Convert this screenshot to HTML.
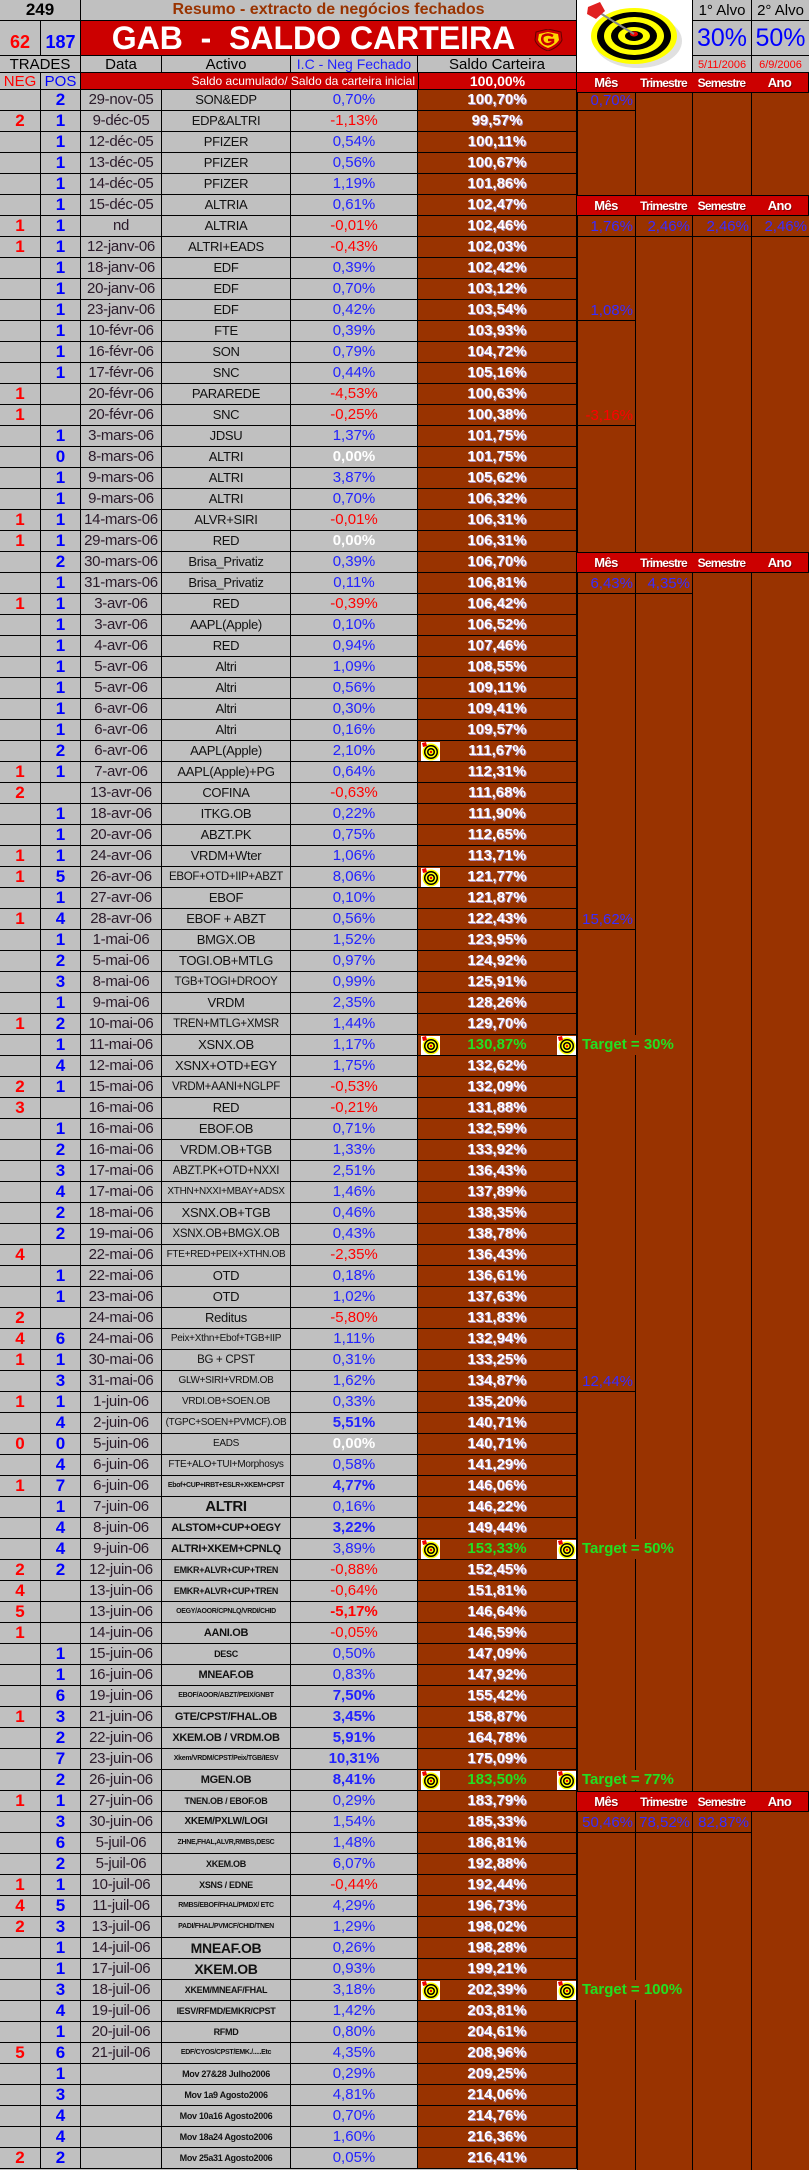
<!DOCTYPE html>
<html><head><meta charset="utf-8">
<style>
*{margin:0;padding:0;box-sizing:border-box}
body{width:809px;height:2170px;overflow:hidden;background:#c0c0c0;position:relative;font-family:"Liberation Sans",Arial,sans-serif}
.ab{position:absolute}
.c{display:flex;align-items:center;justify-content:center;text-align:center;white-space:nowrap}
table{position:absolute;left:0;top:90px;border-collapse:separate;border-spacing:0;table-layout:fixed;width:577px}
td{height:21px;border-right:1px solid #000;border-bottom:1px solid #000;padding:0;text-align:center;white-space:nowrap;overflow:hidden;font-size:14px;color:#222;line-height:20px}
td:nth-child(1){width:41px;color:#f00;font-weight:bold;font-size:17px}
td:nth-child(2){width:40px;color:#00f;font-weight:bold;font-size:17px}
td:nth-child(3){width:81px;color:#2a1a2a;font-size:15px;letter-spacing:-0.3px}
td:nth-child(4){width:129px;color:#111;font-size:13px;letter-spacing:-0.3px}
td:nth-child(5){width:127px;color:#22f;font-size:15px}
td:nth-child(6){width:159px;background:#993300;color:#fff;font-weight:bold;font-size:15px;text-shadow:1px 1px 0 #b090c0;position:relative}
td.r{color:#f00!important}
td.w{color:#fff!important;font-weight:bold}
td.bd{font-weight:bold}
td.g{color:#22e022!important;text-shadow:none!important}
td.s{font-size:11px!important;font-weight:bold}
td.x{font-size:9px!important;font-weight:bold}
td.xx{font-size:7px!important;font-weight:bold}
td.m{font-size:11.5px!important}
td.t{font-size:10px!important}
td.b14{font-weight:bold}
.vl{position:absolute;width:1px;background:#000}
.hl{position:absolute;height:1px;background:#000}
.hd{position:absolute;height:21px;background:#cc0000;color:#fff;font-weight:bold;font-size:13px;display:flex;align-items:center;justify-content:center;border-right:1px solid #000;border-bottom:1px solid #000;border-top:1px solid #000;letter-spacing:-0.6px;text-shadow:1px 1px 0 #800;overflow:hidden;white-space:nowrap}
.hd.n{font-size:12px;letter-spacing:-0.8px}
.v{position:absolute;height:21px;line-height:21px;text-align:right;color:#3a2cff;font-size:15px;padding-right:2px}
.tg{position:absolute;left:578px;width:114px;height:20px;background:#993300;color:#22e022;font-weight:bold;font-size:15px;line-height:20px;padding-left:4px}
.ic{position:absolute;width:19px;height:19px}
</style></head><body>

<div class="ab c" style="left:0;top:0;width:81px;height:21px;font-weight:bold;font-size:17px;border-right:1px solid #000;border-bottom:1px solid #000">249</div>
<div class="ab c" style="left:81px;top:0;width:496px;height:21px;color:#993300;font-weight:bold;font-size:16px;border-right:1px solid #000;border-bottom:1px solid #000">Resumo - extracto de negócios fechados</div>
<div class="ab c" style="left:0;top:21px;width:41px;height:35px;color:#f00;font-weight:bold;font-size:18px;border-right:1px solid #000;border-bottom:1px solid #000;padding-top:8px">62</div>
<div class="ab c" style="left:41px;top:21px;width:40px;height:35px;color:#00f;font-weight:bold;font-size:18px;border-right:1px solid #000;border-bottom:1px solid #000;padding-top:8px">187</div>
<div class="ab c" style="left:81px;top:21px;width:496px;height:35px;background:#cc0000;color:#fff;font-weight:bold;font-size:32px;border-right:1px solid #000;border-bottom:1px solid #000;padding-right:30px;white-space:pre">GAB  -  SALDO CARTEIRA</div>
<svg class="ab" style="left:533px;top:29px" width="31" height="22" viewBox="0 0 31 22"><path d="M3 3 L15 0 L28 3 L29 11 Q26 18 15 22 Q4 18 2 11 Z" fill="#cc0000" stroke="#600" stroke-width="1"/><path d="M6 5 L15 3 L25 5 L26 11 Q23 16 15 19 Q7 16 5 11 Z" fill="#ffd800"/><path d="M20 7 Q15 4 10 7 Q8 11 11 14 Q15 17 20 13 L20 11 L15 11" fill="none" stroke="#cc0000" stroke-width="2.5"/></svg>
<div class="ab c" style="left:0;top:56px;width:81px;height:17px;font-size:15px;border-right:1px solid #000;border-bottom:1px solid #000">TRADES</div>
<div class="ab c" style="left:81px;top:56px;width:81px;height:17px;font-size:15px;border-right:1px solid #000;border-bottom:1px solid #000">Data</div>
<div class="ab c" style="left:162px;top:56px;width:129px;height:17px;font-size:15px;border-right:1px solid #000;border-bottom:1px solid #000">Activo</div>
<div class="ab c" style="left:291px;top:56px;width:127px;height:17px;font-size:14px;color:#22f;border-right:1px solid #000;border-bottom:1px solid #000">I.C - Neg Fechado</div>
<div class="ab c" style="left:418px;top:56px;width:159px;height:17px;font-size:15px;border-right:1px solid #000;border-bottom:1px solid #000">Saldo Carteira</div>
<div class="ab c" style="left:0;top:73px;width:41px;height:17px;font-size:15px;color:#f00;border-right:1px solid #000;border-bottom:1px solid #000">NEG</div>
<div class="ab c" style="left:41px;top:73px;width:40px;height:17px;font-size:15px;color:#00f;border-right:1px solid #000;border-bottom:1px solid #000">POS</div>
<div class="ab" style="left:81px;top:73px;width:337px;height:17px;background:#cc0000;color:#fff;font-size:12px;text-align:right;line-height:17px;padding-right:3px;border-bottom:1px solid #000">Saldo acumulado/ Saldo da carteira inicial</div>
<div class="ab c" style="left:418px;top:73px;width:159px;height:17px;background:#cc0000;color:#fff;font-weight:bold;font-size:14px;border-left:1px solid #000;border-right:1px solid #000;border-bottom:1px solid #000">100,00%</div>

<div class="ab" style="left:577px;top:0;width:116px;height:73px;background:#fff;border-right:1px solid #000;border-bottom:1px solid #000"></div>
<svg class="ab" style="left:578px;top:1px" width="114" height="71" viewBox="0 0 114 71">
<ellipse cx="60" cy="40" rx="44" ry="27" fill="#ccc" opacity=".6"/>
<ellipse cx="56" cy="35" rx="43" ry="28" fill="#ffff00"/>
<ellipse cx="56" cy="35" rx="37" ry="24" fill="#000"/>
<ellipse cx="56" cy="35" rx="30" ry="19" fill="#ffff00"/>
<ellipse cx="56" cy="35" rx="23" ry="14" fill="#000"/>
<ellipse cx="56" cy="35" rx="16" ry="9" fill="#ffff00"/>
<ellipse cx="56" cy="35" rx="9" ry="5" fill="#000"/>
<ellipse cx="56" cy="33" rx="4" ry="2.5" fill="#e00"/>
<line x1="56" y1="33" x2="22" y2="12" stroke="#888" stroke-width="2"/>
<path d="M10 6 L22 1 L27 10 L18 18 L9 13 Z" fill="#e02020"/>
</svg>
<div class="ab c" style="left:693px;top:0;width:59px;height:21px;font-size:15px;border-right:1px solid #000;border-bottom:1px solid #000">1° Alvo</div>
<div class="ab c" style="left:752px;top:0;width:57px;height:21px;font-size:15px;border-bottom:1px solid #000">2° Alvo</div>
<div class="ab c" style="left:693px;top:21px;width:59px;height:35px;font-size:25px;color:#00f;border-right:1px solid #000;border-bottom:1px solid #000">30%</div>
<div class="ab c" style="left:752px;top:21px;width:57px;height:35px;font-size:25px;color:#00f;border-bottom:1px solid #000">50%</div>
<div class="ab c" style="left:693px;top:56px;width:59px;height:17px;font-size:11px;color:#f00;border-right:1px solid #000">5/11/2006</div>
<div class="ab c" style="left:752px;top:56px;width:57px;height:17px;font-size:11px;color:#f00">6/9/2006</div>

<div class="ab" style="left:577px;top:90px;width:232px;height:2080px;background:#993300"></div>
<div class="vl" style="left:577px;top:73px;height:2097px"></div>
<div class="vl" style="left:635px;top:73px;height:2097px"></div>
<div class="vl" style="left:692px;top:73px;height:2097px"></div>
<div class="vl" style="left:751px;top:73px;height:2097px"></div>

<div class="hd" style="left:577px;top:72px;width:59px">Mês</div><div class="hd n" style="left:635px;top:72px;width:58px">Trimestre</div><div class="hd n" style="left:692px;top:72px;width:60px">Semestre</div><div class="hd" style="left:751px;top:72px;width:58px">Ano</div>
<div class="hd" style="left:577px;top:195px;width:59px">Mês</div><div class="hd n" style="left:635px;top:195px;width:58px">Trimestre</div><div class="hd n" style="left:692px;top:195px;width:60px">Semestre</div><div class="hd" style="left:751px;top:195px;width:58px">Ano</div>
<div class="hd" style="left:577px;top:552px;width:59px">Mês</div><div class="hd n" style="left:635px;top:552px;width:58px">Trimestre</div><div class="hd n" style="left:692px;top:552px;width:60px">Semestre</div><div class="hd" style="left:751px;top:552px;width:58px">Ano</div>
<div class="hd" style="left:577px;top:1791px;width:59px">Mês</div><div class="hd n" style="left:635px;top:1791px;width:58px">Trimestre</div><div class="hd n" style="left:692px;top:1791px;width:60px">Semestre</div><div class="hd" style="left:751px;top:1791px;width:58px">Ano</div>

<div class="v" style="left:578px;top:90px;width:57px">0,70%</div><div class="hl" style="left:577px;top:110px;width:59px"></div>
<div class="v" style="left:578px;top:216px;width:57px">1,76%</div><div class="v" style="left:636px;top:216px;width:56px">2,46%</div><div class="v" style="left:693px;top:216px;width:58px">2,46%</div><div class="v" style="left:752px;top:216px;width:57px">2,46%</div>
<div class="hl" style="left:577px;top:236px;width:232px"></div>
<div class="v" style="left:578px;top:300px;width:57px">1,08%</div><div class="hl" style="left:577px;top:320px;width:59px"></div>
<div class="v" style="left:578px;top:405px;width:57px;color:#f00">-3,16%</div><div class="hl" style="left:577px;top:425px;width:59px"></div>
<div class="v" style="left:578px;top:573px;width:57px">6,43%</div><div class="v" style="left:636px;top:573px;width:56px">4,35%</div><div class="hl" style="left:577px;top:593px;width:116px"></div>
<div class="v" style="left:578px;top:909px;width:57px">15,62%</div><div class="hl" style="left:577px;top:929px;width:59px"></div>
<div class="v" style="left:578px;top:1371px;width:57px">12,44%</div><div class="hl" style="left:577px;top:1391px;width:59px"></div>
<div class="v" style="left:578px;top:1812px;width:57px">50,46%</div><div class="v" style="left:636px;top:1812px;width:56px">78,52%</div><div class="v" style="left:693px;top:1812px;width:58px">82,87%</div><div class="hl" style="left:577px;top:1832px;width:175px"></div>

<div class="tg" style="top:1035px">Target = 30%</div>
<div class="tg" style="top:1539px">Target = 50%</div>
<div class="tg" style="top:1770px">Target = 77%</div>
<div class="tg" style="top:1980px">Target = 100%</div>

<table>
<tr><td></td><td>2</td><td>29-nov-05</td><td>SON&amp;EDP</td><td>0,70%</td><td>100,70%</td></tr>
<tr><td>2</td><td>1</td><td>9-déc-05</td><td>EDP&amp;ALTRI</td><td class="r">-1,13%</td><td>99,57%</td></tr>
<tr><td></td><td>1</td><td>12-déc-05</td><td>PFIZER</td><td>0,54%</td><td>100,11%</td></tr>
<tr><td></td><td>1</td><td>13-déc-05</td><td>PFIZER</td><td>0,56%</td><td>100,67%</td></tr>
<tr><td></td><td>1</td><td>14-déc-05</td><td>PFIZER</td><td>1,19%</td><td>101,86%</td></tr>
<tr><td></td><td>1</td><td>15-déc-05</td><td>ALTRIA</td><td>0,61%</td><td>102,47%</td></tr>
<tr><td>1</td><td>1</td><td>nd</td><td>ALTRIA</td><td class="r">-0,01%</td><td>102,46%</td></tr>
<tr><td>1</td><td>1</td><td>12-janv-06</td><td>ALTRI+EADS</td><td class="r">-0,43%</td><td>102,03%</td></tr>
<tr><td></td><td>1</td><td>18-janv-06</td><td>EDF</td><td>0,39%</td><td>102,42%</td></tr>
<tr><td></td><td>1</td><td>20-janv-06</td><td>EDF</td><td>0,70%</td><td>103,12%</td></tr>
<tr><td></td><td>1</td><td>23-janv-06</td><td>EDF</td><td>0,42%</td><td>103,54%</td></tr>
<tr><td></td><td>1</td><td>10-févr-06</td><td>FTE</td><td>0,39%</td><td>103,93%</td></tr>
<tr><td></td><td>1</td><td>16-févr-06</td><td>SON</td><td>0,79%</td><td>104,72%</td></tr>
<tr><td></td><td>1</td><td>17-févr-06</td><td>SNC</td><td>0,44%</td><td>105,16%</td></tr>
<tr><td>1</td><td></td><td>20-févr-06</td><td>PARAREDE</td><td class="r">-4,53%</td><td>100,63%</td></tr>
<tr><td>1</td><td></td><td>20-févr-06</td><td>SNC</td><td class="r">-0,25%</td><td>100,38%</td></tr>
<tr><td></td><td>1</td><td>3-mars-06</td><td>JDSU</td><td>1,37%</td><td>101,75%</td></tr>
<tr><td></td><td>0</td><td>8-mars-06</td><td>ALTRI</td><td class="w">0,00%</td><td>101,75%</td></tr>
<tr><td></td><td>1</td><td>9-mars-06</td><td>ALTRI</td><td>3,87%</td><td>105,62%</td></tr>
<tr><td></td><td>1</td><td>9-mars-06</td><td>ALTRI</td><td>0,70%</td><td>106,32%</td></tr>
<tr><td>1</td><td>1</td><td>14-mars-06</td><td>ALVR+SIRI</td><td class="r">-0,01%</td><td>106,31%</td></tr>
<tr><td>1</td><td>1</td><td>29-mars-06</td><td>RED</td><td class="w">0,00%</td><td>106,31%</td></tr>
<tr><td></td><td>2</td><td>30-mars-06</td><td>Brisa_Privatiz</td><td>0,39%</td><td>106,70%</td></tr>
<tr><td></td><td>1</td><td>31-mars-06</td><td>Brisa_Privatiz</td><td>0,11%</td><td>106,81%</td></tr>
<tr><td>1</td><td>1</td><td>3-avr-06</td><td>RED</td><td class="r">-0,39%</td><td>106,42%</td></tr>
<tr><td></td><td>1</td><td>3-avr-06</td><td>AAPL(Apple)</td><td>0,10%</td><td>106,52%</td></tr>
<tr><td></td><td>1</td><td>4-avr-06</td><td>RED</td><td>0,94%</td><td>107,46%</td></tr>
<tr><td></td><td>1</td><td>5-avr-06</td><td>Altri</td><td>1,09%</td><td>108,55%</td></tr>
<tr><td></td><td>1</td><td>5-avr-06</td><td>Altri</td><td>0,56%</td><td>109,11%</td></tr>
<tr><td></td><td>1</td><td>6-avr-06</td><td>Altri</td><td>0,30%</td><td>109,41%</td></tr>
<tr><td></td><td>1</td><td>6-avr-06</td><td>Altri</td><td>0,16%</td><td>109,57%</td></tr>
<tr><td></td><td>2</td><td>6-avr-06</td><td>AAPL(Apple)</td><td>2,10%</td><td>111,67%</td></tr>
<tr><td>1</td><td>1</td><td>7-avr-06</td><td>AAPL(Apple)+PG</td><td>0,64%</td><td>112,31%</td></tr>
<tr><td>2</td><td></td><td>13-avr-06</td><td>COFINA</td><td class="r">-0,63%</td><td>111,68%</td></tr>
<tr><td></td><td>1</td><td>18-avr-06</td><td>ITKG.OB</td><td>0,22%</td><td>111,90%</td></tr>
<tr><td></td><td>1</td><td>20-avr-06</td><td>ABZT.PK</td><td>0,75%</td><td>112,65%</td></tr>
<tr><td>1</td><td>1</td><td>24-avr-06</td><td>VRDM+Wter</td><td>1,06%</td><td>113,71%</td></tr>
<tr><td>1</td><td>5</td><td>26-avr-06</td><td class="m">EBOF+OTD+IIP+ABZT</td><td>8,06%</td><td>121,77%</td></tr>
<tr><td></td><td>1</td><td>27-avr-06</td><td>EBOF</td><td>0,10%</td><td>121,87%</td></tr>
<tr><td>1</td><td>4</td><td>28-avr-06</td><td>EBOF + ABZT</td><td>0,56%</td><td>122,43%</td></tr>
<tr><td></td><td>1</td><td>1-mai-06</td><td>BMGX.OB</td><td>1,52%</td><td>123,95%</td></tr>
<tr><td></td><td>2</td><td>5-mai-06</td><td>TOGI.OB+MTLG</td><td>0,97%</td><td>124,92%</td></tr>
<tr><td></td><td>3</td><td>8-mai-06</td><td class="m">TGB+TOGI+DROOY</td><td>0,99%</td><td>125,91%</td></tr>
<tr><td></td><td>1</td><td>9-mai-06</td><td>VRDM</td><td>2,35%</td><td>128,26%</td></tr>
<tr><td>1</td><td>2</td><td>10-mai-06</td><td class="m">TREN+MTLG+XMSR</td><td>1,44%</td><td>129,70%</td></tr>
<tr><td></td><td>1</td><td>11-mai-06</td><td>XSNX.OB</td><td>1,17%</td><td class="g">130,87%</td></tr>
<tr><td></td><td>4</td><td>12-mai-06</td><td>XSNX+OTD+EGY</td><td>1,75%</td><td>132,62%</td></tr>
<tr><td>2</td><td>1</td><td>15-mai-06</td><td class="m">VRDM+AANI+NGLPF</td><td class="r">-0,53%</td><td>132,09%</td></tr>
<tr><td>3</td><td></td><td>16-mai-06</td><td>RED</td><td class="r">-0,21%</td><td>131,88%</td></tr>
<tr><td></td><td>1</td><td>16-mai-06</td><td>EBOF.OB</td><td>0,71%</td><td>132,59%</td></tr>
<tr><td></td><td>2</td><td>16-mai-06</td><td>VRDM.OB+TGB</td><td>1,33%</td><td>133,92%</td></tr>
<tr><td></td><td>3</td><td>17-mai-06</td><td class="m">ABZT.PK+OTD+NXXI</td><td>2,51%</td><td>136,43%</td></tr>
<tr><td></td><td>4</td><td>17-mai-06</td><td class="t">XTHN+NXXI+MBAY+ADSX</td><td>1,46%</td><td>137,89%</td></tr>
<tr><td></td><td>2</td><td>18-mai-06</td><td>XSNX.OB+TGB</td><td>0,46%</td><td>138,35%</td></tr>
<tr><td></td><td>2</td><td>19-mai-06</td><td class="m">XSNX.OB+BMGX.OB</td><td>0,43%</td><td>138,78%</td></tr>
<tr><td>4</td><td></td><td>22-mai-06</td><td class="t">FTE+RED+PEIX+XTHN.OB</td><td class="r">-2,35%</td><td>136,43%</td></tr>
<tr><td></td><td>1</td><td>22-mai-06</td><td>OTD</td><td>0,18%</td><td>136,61%</td></tr>
<tr><td></td><td>1</td><td>23-mai-06</td><td>OTD</td><td>1,02%</td><td>137,63%</td></tr>
<tr><td>2</td><td></td><td>24-mai-06</td><td>Reditus</td><td class="r">-5,80%</td><td>131,83%</td></tr>
<tr><td>4</td><td>6</td><td>24-mai-06</td><td class="t">Peix+Xthn+Ebof+TGB+IIP</td><td>1,11%</td><td>132,94%</td></tr>
<tr><td>1</td><td>1</td><td>30-mai-06</td><td class="m">BG + CPST</td><td>0,31%</td><td>133,25%</td></tr>
<tr><td></td><td>3</td><td>31-mai-06</td><td class="t">GLW+SIRI+VRDM.OB</td><td>1,62%</td><td>134,87%</td></tr>
<tr><td>1</td><td>1</td><td>1-juin-06</td><td class="t">VRDI.OB+SOEN.OB</td><td>0,33%</td><td>135,20%</td></tr>
<tr><td></td><td>4</td><td>2-juin-06</td><td class="t">(TGPC+SOEN+PVMCF).OB</td><td class="bd">5,51%</td><td>140,71%</td></tr>
<tr><td>0</td><td>0</td><td>5-juin-06</td><td class="t">EADS</td><td class="w">0,00%</td><td>140,71%</td></tr>
<tr><td></td><td>4</td><td>6-juin-06</td><td class="t">FTE+ALO+TUI+Morphosys</td><td>0,58%</td><td>141,29%</td></tr>
<tr><td>1</td><td>7</td><td>6-juin-06</td><td class="xx">Ebof+CUP+IRBT+ESLR+XKEM+CPST</td><td class="bd">4,77%</td><td>146,06%</td></tr>
<tr><td></td><td>1</td><td>7-juin-06</td><td class="b14" style="font-size:15px">ALTRI</td><td>0,16%</td><td>146,22%</td></tr>
<tr><td></td><td>4</td><td>8-juin-06</td><td class="s">ALSTOM+CUP+OEGY</td><td class="bd">3,22%</td><td>149,44%</td></tr>
<tr><td></td><td>4</td><td>9-juin-06</td><td class="s">ALTRI+XKEM+CPNLQ</td><td>3,89%</td><td class="g">153,33%</td></tr>
<tr><td>2</td><td>2</td><td>12-juin-06</td><td class="x">EMKR+ALVR+CUP+TREN</td><td class="r">-0,88%</td><td>152,45%</td></tr>
<tr><td>4</td><td></td><td>13-juin-06</td><td class="x">EMKR+ALVR+CUP+TREN</td><td class="r">-0,64%</td><td>151,81%</td></tr>
<tr><td>5</td><td></td><td>13-juin-06</td><td class="xx">OEGY/AOOR/CPNLQ/VRDI/CHID</td><td class="r bd">-5,17%</td><td>146,64%</td></tr>
<tr><td>1</td><td></td><td>14-juin-06</td><td class="s">AANI.OB</td><td class="r">-0,05%</td><td>146,59%</td></tr>
<tr><td></td><td>1</td><td>15-juin-06</td><td class="x">DESC</td><td>0,50%</td><td>147,09%</td></tr>
<tr><td></td><td>1</td><td>16-juin-06</td><td class="s">MNEAF.OB</td><td>0,83%</td><td>147,92%</td></tr>
<tr><td></td><td>6</td><td>19-juin-06</td><td class="xx">EBOF/AOOR/ABZT/PEIX/GNBT</td><td class="bd">7,50%</td><td>155,42%</td></tr>
<tr><td>1</td><td>3</td><td>21-juin-06</td><td class="s">GTE/CPST/FHAL.OB</td><td class="bd">3,45%</td><td>158,87%</td></tr>
<tr><td></td><td>2</td><td>22-juin-06</td><td class="s">XKEM.OB / VRDM.OB</td><td class="bd">5,91%</td><td>164,78%</td></tr>
<tr><td></td><td>7</td><td>23-juin-06</td><td class="xx">Xkem/VRDM/CPST/Peix/TGB/IESV</td><td class="bd">10,31%</td><td>175,09%</td></tr>
<tr><td></td><td>2</td><td>26-juin-06</td><td class="s">MGEN.OB</td><td class="bd">8,41%</td><td class="g">183,50%</td></tr>
<tr><td>1</td><td>1</td><td>27-juin-06</td><td class="x">TNEN.OB / EBOF.OB</td><td>0,29%</td><td>183,79%</td></tr>
<tr><td></td><td>3</td><td>30-juin-06</td><td class="x" style="font-size:10px!important">XKEM/PXLW/LOGI</td><td>1,54%</td><td>185,33%</td></tr>
<tr><td></td><td>6</td><td>5-juil-06</td><td class="xx">ZHNE,FHAL,ALVR,RMBS,DESC</td><td>1,48%</td><td>186,81%</td></tr>
<tr><td></td><td>2</td><td>5-juil-06</td><td class="x">XKEM.OB</td><td>6,07%</td><td>192,88%</td></tr>
<tr><td>1</td><td>1</td><td>10-juil-06</td><td class="x">XSNS / EDNE</td><td class="r">-0,44%</td><td>192,44%</td></tr>
<tr><td>4</td><td>5</td><td>11-juil-06</td><td class="xx">RMBS/EBOF/FHAL/PMDX/ ETC</td><td>4,29%</td><td>196,73%</td></tr>
<tr><td>2</td><td>3</td><td>13-juil-06</td><td class="xx">PADI/FHAL/PVMCF/CHID/TNEN</td><td>1,29%</td><td>198,02%</td></tr>
<tr><td></td><td>1</td><td>14-juil-06</td><td class="b14" style="font-size:14px">MNEAF.OB</td><td>0,26%</td><td>198,28%</td></tr>
<tr><td></td><td>1</td><td>17-juil-06</td><td class="b14" style="font-size:14px">XKEM.OB</td><td>0,93%</td><td>199,21%</td></tr>
<tr><td></td><td>3</td><td>18-juil-06</td><td class="x">XKEM/MNEAF/FHAL</td><td>3,18%</td><td>202,39%</td></tr>
<tr><td></td><td>4</td><td>19-juil-06</td><td class="x">IESV/RFMD/EMKR/CPST</td><td>1,42%</td><td>203,81%</td></tr>
<tr><td></td><td>1</td><td>20-juil-06</td><td class="x">RFMD</td><td>0,80%</td><td>204,61%</td></tr>
<tr><td>5</td><td>6</td><td>21-juil-06</td><td class="xx">EDF/CYOS/CPST/EMK./.....Etc</td><td>4,35%</td><td>208,96%</td></tr>
<tr><td></td><td>1</td><td></td><td class="x">Mov 27&amp;28 Julho2006</td><td>0,29%</td><td>209,25%</td></tr>
<tr><td></td><td>3</td><td></td><td class="x">Mov 1a9 Agosto2006</td><td>4,81%</td><td>214,06%</td></tr>
<tr><td></td><td>4</td><td></td><td class="x">Mov 10a16 Agosto2006</td><td>0,70%</td><td>214,76%</td></tr>
<tr><td></td><td>4</td><td></td><td class="x">Mov 18a24 Agosto2006</td><td>1,60%</td><td>216,36%</td></tr>
<tr><td>2</td><td>2</td><td></td><td class="x">Mov 25a31 Agosto2006</td><td>0,05%</td><td>216,41%</td></tr>
</table>

<svg width="0" height="0" style="position:absolute"><defs><g id="t"><rect width="19" height="19" fill="#fff"/><circle cx="10" cy="10" r="8.5" fill="#ffff00"/><circle cx="10" cy="10" r="7" fill="#000"/><circle cx="10" cy="10" r="5.5" fill="#ffff00"/><circle cx="10" cy="10" r="4" fill="#000"/><circle cx="10" cy="10" r="2.5" fill="#ffff00"/><circle cx="10" cy="10" r="1.2" fill="#e00"/><path d="M1 1 L5 0 L6 4 L2 5 Z" fill="#e00"/></g></defs></svg>
<svg class="ic" style="left:421px;top:742px"><use href="#t"/></svg>
<svg class="ic" style="left:421px;top:868px"><use href="#t"/></svg>
<svg class="ic" style="left:421px;top:1036px"><use href="#t"/></svg><svg class="ic" style="left:557px;top:1036px"><use href="#t"/></svg>
<svg class="ic" style="left:421px;top:1540px"><use href="#t"/></svg><svg class="ic" style="left:557px;top:1540px"><use href="#t"/></svg>
<svg class="ic" style="left:421px;top:1771px"><use href="#t"/></svg><svg class="ic" style="left:557px;top:1771px"><use href="#t"/></svg>
<svg class="ic" style="left:421px;top:1981px"><use href="#t"/></svg><svg class="ic" style="left:557px;top:1981px"><use href="#t"/></svg>
</body></html>
